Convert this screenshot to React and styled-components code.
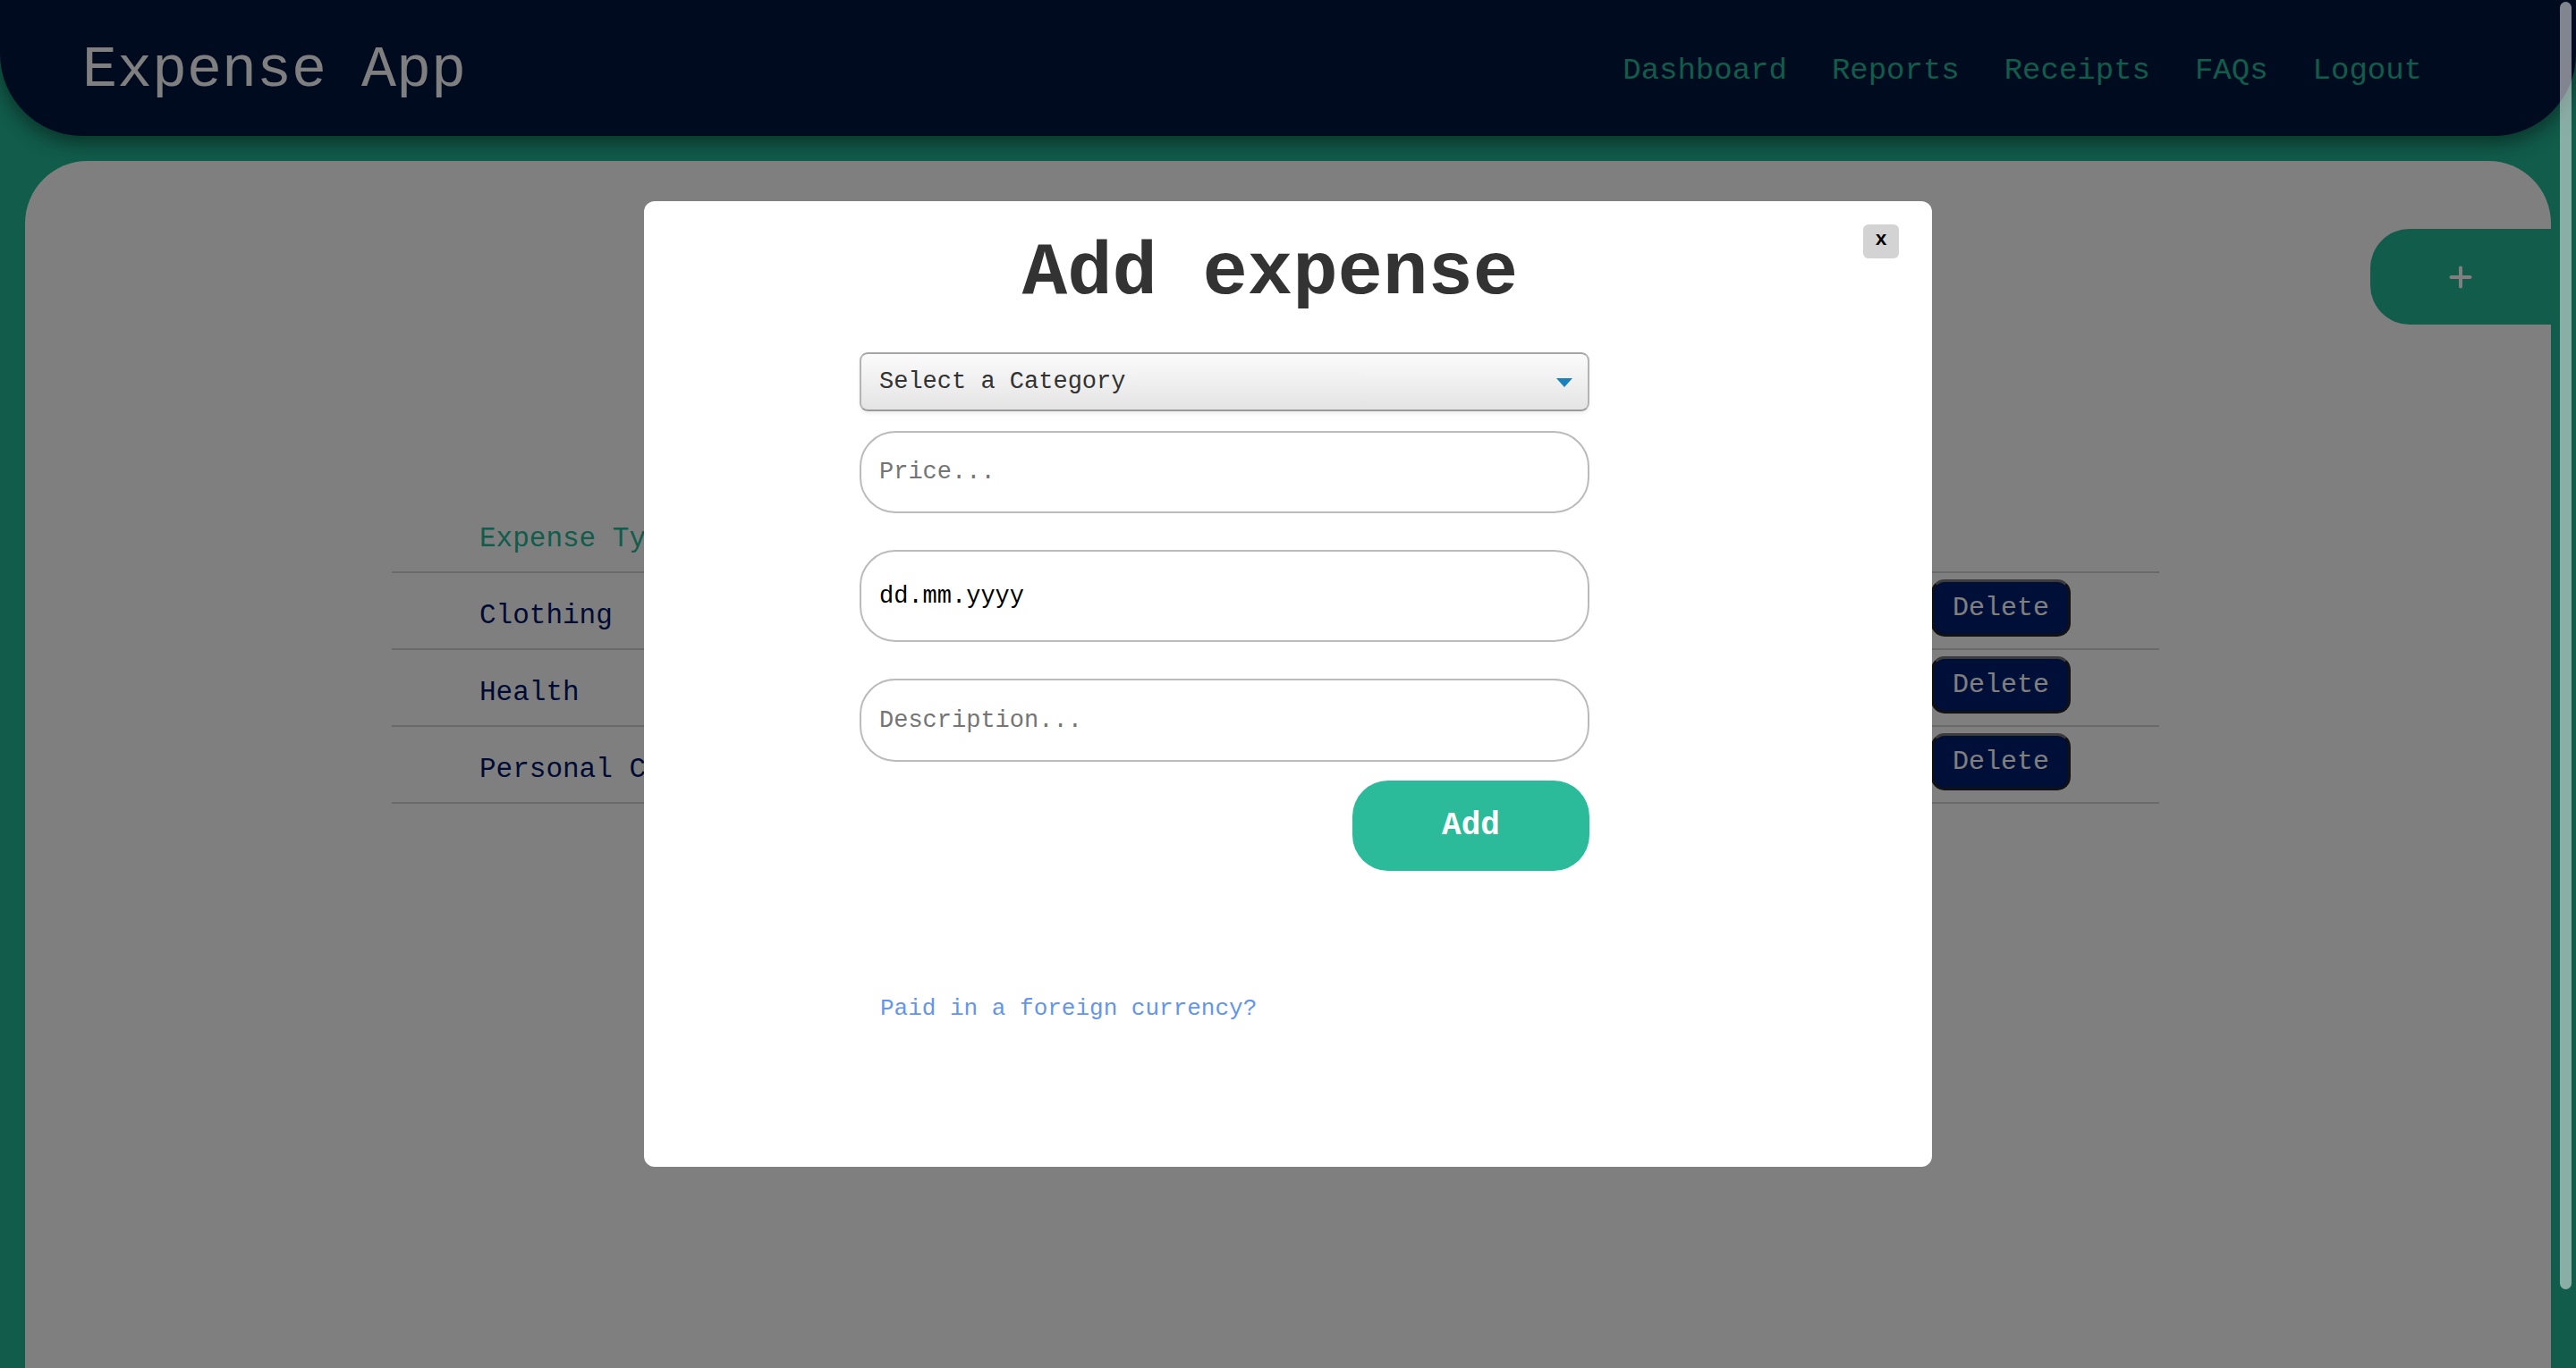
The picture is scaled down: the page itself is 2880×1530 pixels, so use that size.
import React from 'react';
import styled, { createGlobalStyle } from 'styled-components';
import { Plus } from 'lucide-react';

// --- Global ---

const GlobalStyle = createGlobalStyle`
  html, body {
    margin: 0;
    height: 100%;
    overflow: hidden;
  }
  body {
    background: #22b896;
    font-family: 'Liberation Mono', 'Courier New', monospace;
  }
  * {
    box-sizing: border-box;
  }
`;

// --- Page chrome ---

const Page = styled.div`
  min-height: 100vh;
`;

const Header = styled.header`
  position: relative;
  z-index: 1;
  height: 152px;
  display: flex;
  align-items: center;
  justify-content: space-between;
  padding: 6px 172px 0 92px;
  background: #001640;
  border-radius: 0 0 92px 92px;
  box-shadow: 0 8px 22px rgba(0, 0, 0, 0.45);
`;

const Brand = styled.h1`
  margin: 0;
  font-size: 65px;
  font-weight: 400;
  color: #ffffff;
`;

const Nav = styled.nav`
  display: flex;
  gap: 50px;
`;

const NavLink = styled.a`
  font-size: 34px;
  color: #22b896;
  text-decoration: none;
`;

const Card = styled.main`
  position: relative;
  margin: 28px 28px 0;
  min-height: 1400px;
  padding-top: 385px;
  background: #ffffff;
  border-radius: 70px 70px 0 0;
`;

const AddTab = styled.button`
  position: absolute;
  top: 76px;
  right: 0;
  width: 202px;
  height: 107px;
  display: flex;
  align-items: center;
  justify-content: center;
  border: none;
  border-radius: 44px 0 0 44px;
  background: #22b896;
  color: #ffffff;
`;

// --- Expense table ---

const Table = styled.div`
  width: 1976px;
  margin-left: 410px;
`;

const Row = styled.div`
  display: grid;
  grid-template-columns: 600px 340px 400px 1fr 255px;
  align-items: center;
  height: ${(p) => (p.$head ? '76px' : '86px')};
  border-bottom: 2px solid #d4d4d4;
  font-size: 31px;
  color: ${(p) => (p.$head ? '#22b896' : '#00166a')};
`;

const Cell = styled.div`
  padding-left: ${(p) => (p.$first ? '98px' : '0')};
  padding-top: ${(p) => (p.$head ? '0' : '10px')};
  white-space: nowrap;
`;

const DeleteButton = styled.button`
  align-self: start;
  margin-top: 7px;
  width: 156px;
  height: 64px;
  padding: 0;
  font-family: inherit;
  font-size: 30px;
  color: #ffffff;
  background: #001e70;
  border: 3px solid #222222;
  border-top-color: #777777;
  border-radius: 15px;
`;

// --- Modal ---

const Overlay = styled.div`
  position: fixed;
  inset: 0;
  z-index: 10;
  display: flex;
  align-items: center;
  justify-content: center;
  background: rgba(0, 0, 0, 0.5);
`;

const Modal = styled.div`
  width: 1440px;
  height: 1080px;
  display: flex;
  flex-direction: column;
  padding: 26px 37px;
  background: #ffffff;
  border-radius: 12px;
`;

const ModalHead = styled.div`
  display: flex;
  align-items: flex-start;
`;

const ModalTitle = styled.h2`
  flex: 1;
  margin: 7px 0 0;
  text-align: center;
  font-size: 84px;
  line-height: 95px;
  font-weight: 700;
  color: #333333;
`;

const CloseButton = styled.button`
  width: 40px;
  height: 38px;
  padding: 0 0 4px;
  border: none;
  border-radius: 6px;
  background: #d3d3d3;
  font-family: inherit;
  font-size: 22px;
  font-weight: 700;
  color: #000000;
`;

const Form = styled.form`
  width: 816px;
  margin: 41px 0 0 204px;
  display: flex;
  flex-direction: column;
`;

const SelectWrap = styled.div`
  position: relative;
  height: 66px;
`;

const Select = styled.select`
  appearance: none;
  width: 100%;
  height: 100%;
  padding: 0 60px 0 20px;
  font-family: inherit;
  font-size: 27px;
  color: #333333;
  background: linear-gradient(#fbfbfb, #e4e4e4);
  border: 2px solid #b4b4b4;
  border-top-color: #a6a6a6;
  border-bottom-color: #9a9a9a;
  border-radius: 9px;
  box-shadow: 0 3px 4px rgba(0, 0, 0, 0.06);
`;

const Caret = styled.span`
  position: absolute;
  top: 29px;
  right: 19px;
  width: 0;
  height: 0;
  border-left: 9px solid transparent;
  border-right: 9px solid transparent;
  border-top: 10px solid #1b80be;
  pointer-events: none;
`;

const Field = styled.input`
  height: ${(p) => p.$h}px;
  margin-top: ${(p) => p.$gap}px;
  padding: 0 20px;
  font-family: inherit;
  font-size: 27px;
  color: #000000;
  background: #ffffff;
  border: 2px solid #bbbbbb;
  border-radius: 40px;
  outline: none;

  &::placeholder {
    color: #757575;
  }
`;

const SubmitButton = styled.button`
  align-self: flex-end;
  width: 265px;
  height: 101px;
  margin-top: 21px;
  border: none;
  border-radius: 40px;
  background: #2bbb9b;
  font-family: inherit;
  font-size: 36px;
  font-weight: 700;
  color: #ffffff;
`;

const CurrencyLink = styled.a`
  margin: 139px 0 0 23px;
  font-size: 26px;
  color: #6495ed;
  text-decoration: none;
`;

const ScrollThumb = styled.div`
  position: fixed;
  top: 2px;
  right: 5px;
  z-index: 20;
  width: 13px;
  height: 1440px;
  border-radius: 7px;
  background: rgba(255, 255, 255, 0.5);
`;

// --- Data ---

const navItems = ['Dashboard', 'Reports', 'Receipts', 'FAQs', 'Logout'];

const expenses = [
  { type: 'Clothing', price: '45.00', date: '12.03.2024', note: 'Winter jacket' },
  { type: 'Health', price: '20.50', date: '14.03.2024', note: 'Pharmacy' },
  { type: 'Personal Care', price: '12.99', date: '18.03.2024', note: 'Haircut' },
];

// --- Component ---

const App = () => {
  return (
    <>
      <GlobalStyle />
      <Page>
        <Header>
          <Brand>Expense App</Brand>
          <Nav>
            {navItems.map((item) => (
              <NavLink key={item} href="#">{item}</NavLink>
            ))}
          </Nav>
        </Header>

        <Card>
          <AddTab aria-label="Add expense">
            <Plus size={36} strokeWidth={2.7} />
          </AddTab>

          <Table>
            <Row $head>
              <Cell $head $first>Expense Type</Cell>
              <Cell $head>Price</Cell>
              <Cell $head>Date</Cell>
              <Cell $head>Description</Cell>
              <Cell $head />
            </Row>
            {expenses.map((e) => (
              <Row key={e.type}>
                <Cell $first>{e.type}</Cell>
                <Cell>{e.price}</Cell>
                <Cell>{e.date}</Cell>
                <Cell>{e.note}</Cell>
                <DeleteButton>Delete</DeleteButton>
              </Row>
            ))}
          </Table>
        </Card>
      </Page>

      <Overlay>
        <Modal>
          <ModalHead>
            <ModalTitle>Add expense</ModalTitle>
            <CloseButton>x</CloseButton>
          </ModalHead>

          <Form onSubmit={(ev) => ev.preventDefault()}>
            <SelectWrap>
              <Select defaultValue="">
                <option value="" disabled>Select a Category</option>
                <option>Clothing</option>
                <option>Health</option>
                <option>Personal Care</option>
              </Select>
              <Caret />
            </SelectWrap>
            <Field $h={92} $gap={22} placeholder="Price..." />
            <Field $h={103} $gap={41} defaultValue="dd.mm.yyyy" readOnly />
            <Field $h={93} $gap={41} placeholder="Description..." />
            <SubmitButton type="submit">Add</SubmitButton>
            <CurrencyLink href="#">Paid in a foreign currency?</CurrencyLink>
          </Form>
        </Modal>
      </Overlay>

      <ScrollThumb />
    </>
  );
};

export default App;
